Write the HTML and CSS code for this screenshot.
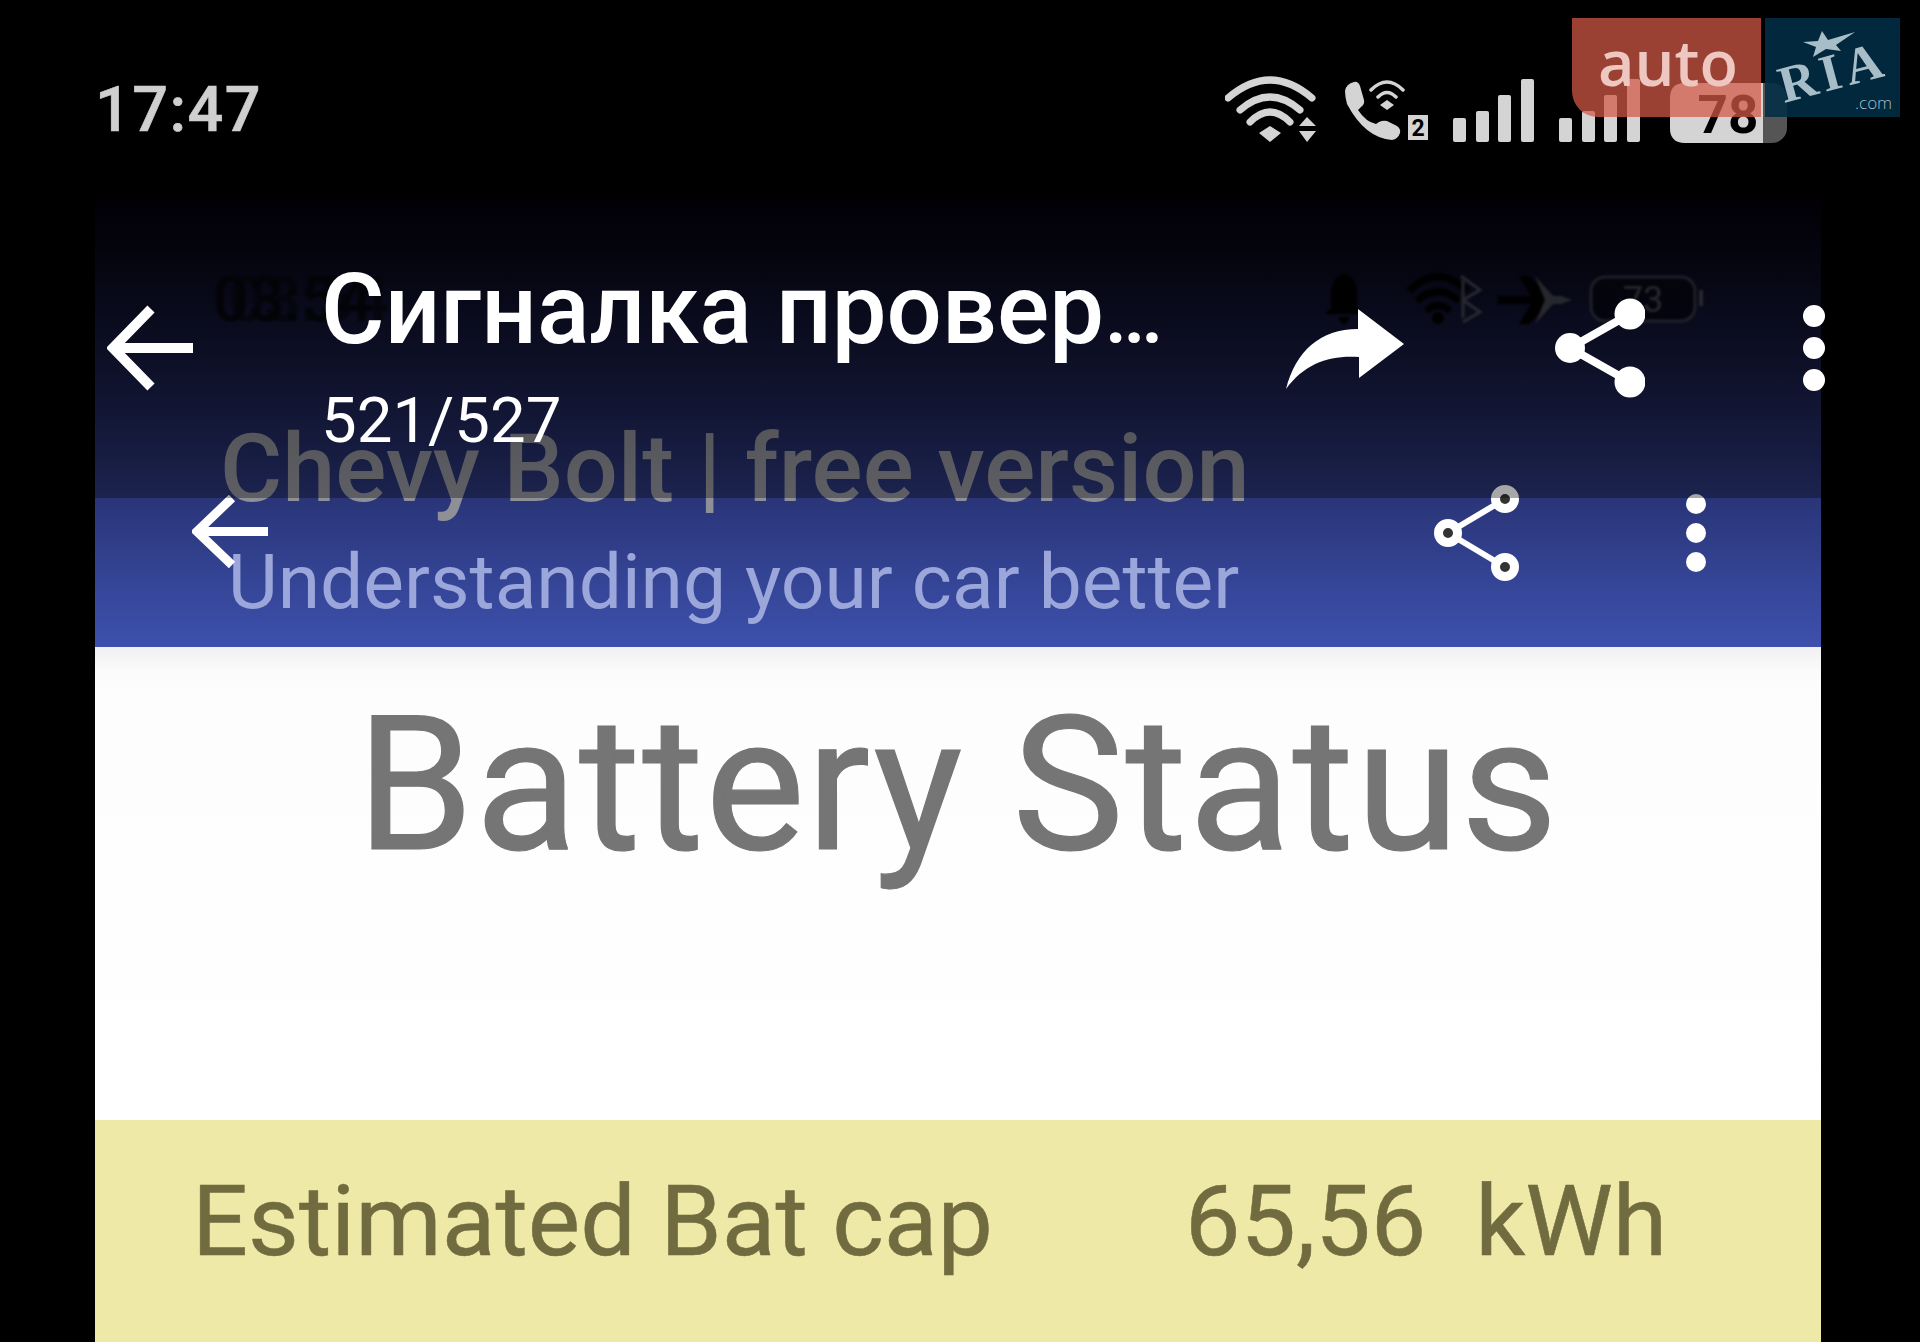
FILE: index.html
```html
<!DOCTYPE html>
<html lang="en">
  <head>
    <meta charset="UTF-8" />
    <title>Battery Status</title>
    <link rel="stylesheet" href="styles.css" />
  </head>
  <body>
    <header class="status">
      <div class="time">17:47</div>
      <div class="status-icons">
        <svg class="wifi" viewBox="1225 75 93 70">
          <path class="arc" d="M1228 98Q1270 62 1312 98M1240 110Q1270 84 1300 110M1250 122Q1270 102 1290 122" />
          <path class="solid" d="M1270 126L1281 133L1270 142L1259 133ZM1307 117L1316 126H1299ZM1299 131H1316L1307 142Z" />
        </svg>
        <svg class="call" viewBox="1343 75 85 70">
          <path class="solid" d="M1345 91Q1346 84 1354 82Q1358 81 1360 86L1364 100Q1365 104 1361 107L1358 110Q1366 122 1376 124L1379 122Q1383 120 1387 121L1397 126Q1401 129 1400 133Q1398 139 1392 140Q1365 138 1347 104Q1345 97 1345 91Z" />
          <path class="arc arc-small" d="M1371 90Q1387 74 1403 90M1378 97Q1387 88 1396 97" />
          <path class="solid" d="M1387 100L1394 105L1387 110L1380 105Z" />
          <rect class="solid" x="1408" y="115" width="20" height="25" />
          <text class="sim" x="1418" y="136">2</text>
        </svg>
        <svg class="signal" viewBox="1453 75 81 70">
          <rect class="solid" x="1453" y="118" width="13" height="24" rx="2" />
          <rect class="solid" x="1476" y="111" width="13" height="31" rx="2" />
          <rect class="solid" x="1498" y="95" width="13" height="47" rx="2" />
          <rect class="solid" x="1521" y="79" width="13" height="63" rx="2" />
        </svg>
        <svg class="signal" viewBox="1453 75 81 70">
          <rect class="solid" x="1453" y="118" width="13" height="24" rx="2" />
          <rect class="solid" x="1476" y="111" width="13" height="31" rx="2" />
          <rect class="solid" x="1498" y="95" width="13" height="47" rx="2" />
          <rect class="solid" x="1521" y="79" width="13" height="63" rx="2" />
        </svg>
        <svg class="battery" viewBox="1665 75 122 70">
          <rect class="battery-tip" x="1670" y="83" width="117" height="60" rx="15" />
          <path class="solid" d="M1763 83V143H1685Q1670 143 1670 128V98Q1670 83 1685 83Z" />
          <text class="battery-level" x="1728" y="133">78</text>
        </svg>
      </div>
      <div class="logo">
        <div class="logo-auto">auto</div>
        <div class="logo-ria">
          <svg viewBox="0 0 135 99">
            <polygon class="ria-mark" points="57,13 63,22 90,14 71,27 76,33 61,31 48,39 51,29 38,24 53,23" />
            <text class="ria-text" x="0" y="0" transform="translate(19 85) rotate(-15)">RIA</text>
            <text class="ria-com" x="90" y="91">.com</text>
          </svg>
        </div>
      </div>
    </header>

    <main class="screen">
      <section class="appbar">
        <!-- the screenshot inside the screenshot -->
        <div class="old-layer">
          <div class="old-status">
            <div class="old-time">03:54</div>
            <svg class="old-icons" viewBox="1320 270 390 56">
              <path class="old-dark" d="M1343 273Q1356 278 1356 294V308L1362 314H1324L1330 308V294Q1330 278 1343 273ZM1337 317H1349Q1346 324 1343 324Q1340 324 1337 317Z" />
              <path class="old-stroke" d="M1408 291Q1437 262 1466 291M1416 301Q1437 282 1458 301M1425 311Q1437 300 1449 311" />
              <circle class="old-dark" cx="1437" cy="318" r="6" />
              <path class="old-grey-line" d="M1460 276L1479 290L1462 300L1479 312L1462 322M1462 280V318" />
              <path class="old-dark" d="M1497 296H1530L1518 276H1528L1548 296H1552V304H1548L1528 324H1518L1530 304H1497Z" />
              <path class="old-grey-fill" d="M1534 276L1552 296H1560L1571 300L1560 304H1552L1534 324L1544 300Z" />
              <rect class="old-battery" x="1590" y="277" width="104" height="44" rx="14" />
              <text class="old-level" x="1642" y="312">73</text>
              <rect class="old-grey-fill" x="1698" y="290" width="4" height="16" />
            </svg>
          </div>
          <div class="old-bar">
            <svg class="old-back" viewBox="0 0 76 73">
              <path class="arrow-line old-arrow" d="M76 36.5H5M40 3L5 36.5L40 70" />
            </svg>
            <div class="old-titles">
              <div class="old-title">Chevy Bolt | free version</div>
              <div class="old-sub">Understanding your car better</div>
            </div>
            <svg class="old-share" viewBox="0 0 88 88">
              <path class="share-line" d="M15 44L72 10M15 44L72 78" />
              <circle class="share-ring" cx="15" cy="44" r="9.5" />
              <circle class="share-ring" cx="72" cy="10" r="9.5" />
              <circle class="share-ring" cx="72" cy="78" r="9.5" />
            </svg>
            <div class="old-dots"><span></span><span></span><span></span></div>
          </div>
        </div>

        <div class="dim"></div>

        <div class="viewer-bar">
          <svg class="back" viewBox="0 0 86 86">
            <path class="arrow-line" d="M86 43H6M44 4L6 43L44 82" />
          </svg>
          <div class="titles">
            <div class="title">Сигналка провер<span class="title-more">…</span></div>
            <div class="counter">521/527</div>
          </div>
          <svg class="forward" viewBox="1286 308 118 80">
            <path d="M1286 388C1296 350 1320 328 1358 328V308L1404 343L1359 377V356C1330 354 1305 362 1286 388Z" />
          </svg>
          <svg class="share" viewBox="0 0 90 100">
            <path class="share-line-bold" d="M15 50L75 16M15 50L75 84" />
            <circle cx="15" cy="50" r="15" />
            <circle cx="75" cy="16" r="15.5" />
            <circle cx="75" cy="84" r="15.5" />
          </svg>
          <div class="dots"><span></span><span></span><span></span></div>
        </div>
      </section>

      <h1 class="page-title">Battery Status</h1>

      <div class="row">
        <div class="row-label">Estimated Bat cap</div>
        <div class="row-value">65,56&nbsp; kWh</div>
      </div>
    </main>
  </body>
</html>
```

FILE: styles.css
```css
:root {
  font-family: "Roboto", "Liberation Sans", sans-serif;
}

* {
  box-sizing: border-box;
}

body {
  margin: 0;
  height: 1342px;
  overflow: hidden;
  background-color: #000;
}

/* phone status bar */
.status {
  position: relative;
  display: flex;
  height: 200px;
  padding: 75px 133px 0 95px;
}

.time {
  padding-top: 3px;
  font-size: 63px;
  font-weight: 500;
  line-height: 64px;
  letter-spacing: 1.4px;
  color: #cfcfcf;
  -webkit-text-stroke: 0.6px #cfcfcf;
}

.status-icons {
  display: flex;
  gap: 25px;
  margin-left: auto;
  height: 70px;
}

.status-icons svg {
  height: 70px;
}

.wifi {
  width: 93px;
}

.call {
  width: 85px;
}

.signal {
  width: 81px;
}

.battery {
  width: 122px;
}

.solid {
  fill: #d4d4d4;
}

.arc {
  fill: none;
  stroke: #d4d4d4;
  stroke-width: 7;
  stroke-linecap: round;
}

.arc-small {
  stroke-width: 3.5;
}

.sim {
  font-size: 23px;
  font-weight: 700;
  text-anchor: middle;
  fill: #000;
}

.battery-tip {
  fill: #555;
}

.battery-level {
  font-size: 53px;
  font-weight: 700;
  text-anchor: middle;
  fill: #000;
}

/* watermark */
.logo {
  position: absolute;
  top: 18px;
  left: 1572px;
  display: flex;
  gap: 4px;
}

.logo-auto {
  width: 189px;
  height: 99px;
  padding: 4px 0 0 26px;
  border-bottom-left-radius: 26px;
  background-color: rgba(211, 89, 70, 0.73);
  font-family: "Open Sans", sans-serif;
  font-size: 63px;
  font-weight: 600;
  line-height: 80px;
  color: #eec8c0;
}

.logo-ria {
  width: 135px;
  height: 99px;
  background-color: rgba(1, 46, 70, 0.88);
}

.logo-ria svg {
  display: block;
  width: 135px;
  height: 99px;
}

.ria-mark {
  fill: #a7bdc8;
}

.ria-text {
  font-family: "Liberation Serif", serif;
  font-size: 52px;
  font-weight: 700;
  letter-spacing: 5px;
  fill: #a7bdc8;
}

.ria-com {
  font-family: "Open Sans", sans-serif;
  font-size: 17px;
  font-weight: 300;
  fill: #a7bdc8;
}

/* app screen */
.screen {
  margin: 0 99px 0 95px;
}

.appbar {
  position: relative;
  height: 447px;
  background: linear-gradient(#04000e, #3d50ad);
}

.old-layer {
  position: absolute;
  top: 0;
  left: 0;
  right: 0;
  bottom: 0;
}

.old-status {
  display: flex;
  height: 221px;
  padding: 70px 110px 0 118px;
}

.old-time {
  font-size: 63px;
  line-height: 60px;
  font-weight: 500;
  color: #06070f;
  text-shadow: 16px 0 0 rgba(6, 7, 15, 0.7);
  filter: blur(1px);
}

.old-icons {
  width: 390px;
  height: 56px;
  margin-left: auto;
  filter: blur(1px);
}

.old-dark {
  fill: #000;
}

.old-stroke {
  fill: none;
  stroke: #000;
  stroke-width: 7;
}

.old-grey-line {
  fill: none;
  stroke: #50525f;
  stroke-width: 3;
}

.old-grey-fill {
  fill: #50525f;
}

.old-battery {
  fill: #06081a;
  stroke: #3e4052;
  stroke-width: 3;
}

.old-level {
  font-size: 36px;
  text-anchor: middle;
  fill: #50525f;
}

.old-bar {
  position: relative;
  display: flex;
  align-items: center;
  height: 224px;
  padding-left: 125px;
}

.old-back {
  position: absolute;
  left: 97px;
  top: 74px;
  width: 76px;
  height: 73px;
}

.arrow-line {
  fill: none;
  stroke: #fff;
  stroke-width: 10;
}

.old-arrow {
  stroke-width: 9;
}

.old-titles {
  flex: 1;
  padding-bottom: 22px;
}

.old-title {
  font-size: 95.4px;
  font-weight: 500;
  line-height: 112px;
  color: #8e8f97;
  white-space: nowrap;
}

.old-sub {
  margin-top: 8px;
  margin-left: 8px;
  font-size: 76.7px;
  line-height: 100px;
  color: #9ba6da;
  white-space: nowrap;
}

.old-share {
  width: 88px;
  height: 88px;
  margin-right: 165px;
  overflow: visible;
}

.share-line {
  stroke: #fff;
  stroke-width: 6;
}

.share-ring {
  fill: #333;
  stroke: #fff;
  stroke-width: 9;
}

.old-dots {
  display: flex;
  flex-direction: column;
  gap: 9px;
  margin-right: 115px;
}

.old-dots span {
  width: 20px;
  height: 20px;
  border-radius: 50%;
  background-color: #fff;
}

.dim {
  position: absolute;
  top: 0;
  left: 0;
  right: 0;
  height: 298px;
  background: linear-gradient(rgba(0, 0, 0, 0.6), rgba(0, 0, 0, 0.34));
}

.viewer-bar {
  position: absolute;
  top: 0;
  left: 0;
  right: 0;
  display: flex;
  align-items: center;
  height: 296px;
  padding-left: 12px;
}

.viewer-bar svg {
  flex: none;
  fill: #fff;
}

.back {
  width: 86px;
  height: 86px;
  margin-right: 128px;
}

.titles {
  flex: none;
  width: 965px;
  padding-top: 23px;
  color: #fff;
}

.title {
  font-size: 97.5px;
  font-weight: 500;
  line-height: 112px;
  white-space: nowrap;
}

.title-more {
  font-size: 0.85em;
}

.counter {
  margin-top: 5px;
  font-size: 63.5px;
  line-height: 90px;
}

.forward {
  width: 118px;
  height: 80px;
  margin-right: 151px;
  margin-top: 2px;
}

.share {
  width: 90px;
  height: 100px;
  margin-right: 158px;
}

.share-line-bold {
  stroke: #fff;
  stroke-width: 8;
}

.dots {
  display: flex;
  flex-direction: column;
  gap: 10px;
  flex: none;
}

.dots span {
  width: 22px;
  height: 22px;
  border-radius: 50%;
  background-color: #fff;
}

.page-title {
  height: 473px;
  margin: 0;
  padding-top: 28px;
  background: linear-gradient(#f1f1f5, #fbfbfb 25px, #fdfdfe 45px, #fff);
  font-size: 188px;
  font-weight: 400;
  line-height: 220px;
  letter-spacing: 1.6px;
  text-align: center;
  color: #757575;
  -webkit-text-stroke: 1.2px #757575;
}

.row {
  display: flex;
  height: 222px;
  padding: 44px 0 0 97px;
  background-color: #efe9a8;
  font-size: 98.7px;
  line-height: 114px;
  color: #716b40;
  -webkit-text-stroke: 0.5px #716b40;
}

.row-label {
  width: 993px;
}
```
